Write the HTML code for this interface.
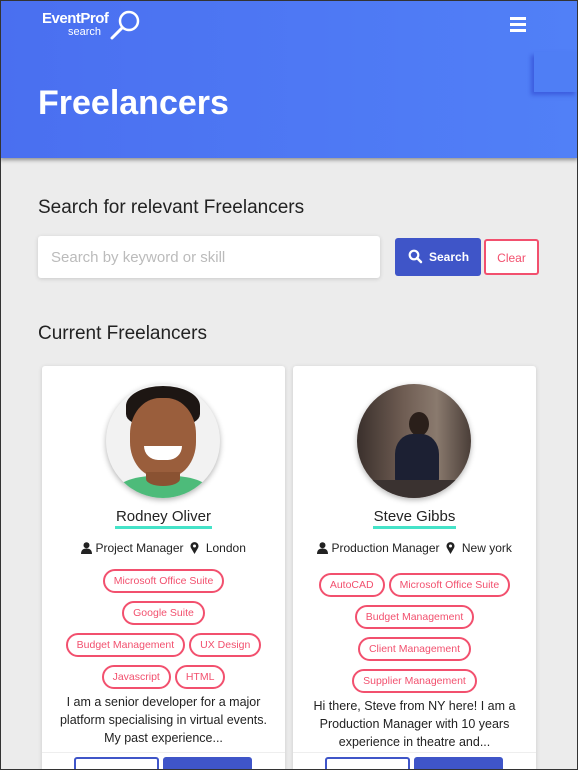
<!DOCTYPE html>
<html><head><meta charset="utf-8"><style>
*{box-sizing:border-box;margin:0;padding:0}
html{width:578px;height:770px;overflow:hidden}
body{width:578px;height:770px;overflow:hidden;background:#ececec;font-family:"Liberation Sans",sans-serif;position:relative}
.frame{position:absolute;left:0;top:0;width:578px;height:770px;border:1px solid #333;pointer-events:none;z-index:9}
.hdr{position:absolute;left:0;top:0;width:578px;height:158px;background:linear-gradient(90deg,#4a6ff0,#5180f7);box-shadow:0 2px 4px rgba(0,0,0,.4)}
.abs{position:absolute}
.card{position:absolute;top:366px;width:243px;height:420px;background:#fff;box-shadow:0 1px 4px rgba(0,0,0,.15);border-radius:3px;text-align:center;color:#222;overflow:hidden}
.av{position:absolute;left:64px;top:18px;width:114px;height:114px;border-radius:50%;box-shadow:0 2px 6px rgba(0,0,0,.3);overflow:hidden}
.name{position:absolute;left:0;right:0;top:142px;font-size:15px}
.name span{display:inline-block;border-bottom:3px solid #45e3c8;padding:0 1px 1px}
.meta{position:absolute;left:0;right:0;top:175px;font-size:12px}
.meta svg{vertical-align:-2px}
.tags{position:absolute;left:8px;right:8px;font-size:10.5px}
.tag{display:inline-block;border:2px solid #f2506e;color:#f2506e;border-radius:13px;padding:4px 9px;margin:4px 2px;line-height:12px}
.desc{position:absolute;left:8px;right:8px;font-size:12.5px;line-height:18px}
.btm{position:absolute;left:0;right:0;top:386px;border-top:1px solid #eee}
.b1{position:absolute;top:391px;width:85px;height:30px;border:2px solid #3f55c8;border-radius:3px;background:#fff}
.b2{position:absolute;top:391px;width:89px;height:30px;background:#3f55c8;border-radius:3px}
</style></head><body>
<div class="frame"></div>
<div class="hdr">
 <div class="abs" style="left:42px;top:10px;color:#fff;font-weight:bold;font-size:15px;letter-spacing:-0.5px">EventProf</div>
 <div class="abs" style="left:68px;top:26px;color:#fff;font-size:11px">search</div>
 <svg class="abs" style="left:100px;top:8px" width="42" height="34"><circle cx="29" cy="13" r="9" fill="none" stroke="#fff" stroke-width="2.5"/><line x1="22" y1="20" x2="12" y2="30" stroke="#fff" stroke-width="3" stroke-linecap="round"/></svg>
 <div class="abs" style="left:510px;top:17px;width:16px;height:3px;background:#fff;box-shadow:0 6px 0 #fff,0 12px 0 #fff"></div>
 <div class="abs" style="left:534px;top:52px;width:44px;height:40px;background:#4f7ef5;box-shadow:-3px 3px 4px rgba(40,60,200,.5)"></div>
 <div class="abs" style="left:38px;top:84px;color:#fff;font-weight:bold;font-size:34px">Freelancers</div>
</div>
<div class="abs" style="left:38px;top:197px;font-size:19px;color:#222">Search for relevant Freelancers</div>
<div class="abs" style="left:38px;top:236px;width:342px;height:42px;background:#fff;border-radius:3px;box-shadow:0 1px 4px rgba(0,0,0,.15);padding:13px 13px;font-size:15px;color:#bbb">Search by keyword or skill</div>
<div class="abs" style="left:395px;top:238px;width:86px;height:38px;background:#3f55c8;border-radius:3px;color:#fff;font-size:12px;font-weight:bold;padding-top:12px;padding-left:34px">Search
 <svg class="abs" style="left:13px;top:11px" width="15" height="15"><circle cx="6" cy="6" r="4.3" fill="none" stroke="#fff" stroke-width="2.2"/><line x1="9" y1="9" x2="13" y2="13" stroke="#fff" stroke-width="2.5" stroke-linecap="round"/></svg></div>
<div class="abs" style="left:484px;top:239px;width:55px;height:36px;background:#fff;border:2px solid #f2506e;border-radius:3px;color:#f2506e;font-size:12px;text-align:center;padding-top:10px">Clear</div>
<div class="abs" style="left:38px;top:323px;font-size:19px;color:#222">Current Freelancers</div>

<div class="card" style="left:42px">
 <div class="av" style="background:#f2f2f2">
  <div class="abs" style="left:20px;top:2px;width:74px;height:40px;border-radius:50% 50% 30% 30%;background:#1d1613"></div>
  <div class="abs" style="left:24px;top:14px;width:66px;height:80px;border-radius:45%;background:#9a5e3c"></div>
  <div class="abs" style="left:38px;top:62px;width:38px;height:14px;border-radius:0 0 20px 20px;background:#fff"></div>
  <div class="abs" style="left:10px;top:92px;width:94px;height:40px;border-radius:40% 40% 0 0;background:#4dbb7a"></div>
  <div class="abs" style="left:40px;top:88px;width:34px;height:14px;border-radius:0 0 50% 50%;background:#8a5232"></div>
 </div>
 <div class="name"><span>Rodney Oliver</span></div>
 <div class="meta"><svg width="11" height="12"><circle cx="5.5" cy="3.2" r="3" fill="#222"/><path d="M0 12 Q0 6.5 5.5 6.5 Q11 6.5 11 12Z" fill="#222"/></svg> Project Manager &nbsp;<svg width="9" height="12"><path d="M4.5 12 L1 6 A4 4 0 1 1 8 6Z" fill="#222"/><circle cx="4.5" cy="4" r="1.5" fill="#fff"/></svg>&nbsp; London</div>
 <div class="tags" style="top:199px">
  <span class="tag">Microsoft Office Suite</span><br><span class="tag">Google Suite</span><br><span class="tag">Budget Management</span><span class="tag">UX Design</span><br><span class="tag">Javascript</span><span class="tag">HTML</span>
 </div>
 <div class="desc" style="top:327px">I am a senior developer for a major platform specialising in virtual events. My past experience...</div>
 <div class="btm"></div>
 <div class="b1" style="left:32px"></div><div class="b2" style="left:121px"></div>
</div>

<div class="card" style="left:293px">
 <div class="av" style="background:linear-gradient(90deg,#3a302c,#6e5c52 40%,#8a7a6e 70%,#4a3e38)">
  <div class="abs" style="left:52px;top:28px;width:20px;height:24px;border-radius:50%;background:#2a1f1a"></div>
  <div class="abs" style="left:38px;top:50px;width:44px;height:50px;border-radius:40% 40% 10% 10%;background:#1c2033"></div>
  <div class="abs" style="left:0;top:96px;width:114px;height:20px;background:#3a3230"></div>
 </div>
 <div class="name"><span>Steve Gibbs</span></div>
 <div class="meta"><svg width="11" height="12"><circle cx="5.5" cy="3.2" r="3" fill="#222"/><path d="M0 12 Q0 6.5 5.5 6.5 Q11 6.5 11 12Z" fill="#222"/></svg> Production Manager &nbsp;<svg width="9" height="12"><path d="M4.5 12 L1 6 A4 4 0 1 1 8 6Z" fill="#222"/><circle cx="4.5" cy="4" r="1.5" fill="#fff"/></svg>&nbsp; New york</div>
 <div class="tags" style="top:203px">
  <span class="tag">AutoCAD</span><span class="tag">Microsoft Office Suite</span><br><span class="tag">Budget Management</span><br><span class="tag">Client Management</span><br><span class="tag">Supplier Management</span>
 </div>
 <div class="desc" style="top:331px">Hi there, Steve from NY here! I am a Production Manager with 10 years experience in theatre and...</div>
 <div class="btm"></div>
 <div class="b1" style="left:32px"></div><div class="b2" style="left:121px"></div>
</div>
</body></html>
